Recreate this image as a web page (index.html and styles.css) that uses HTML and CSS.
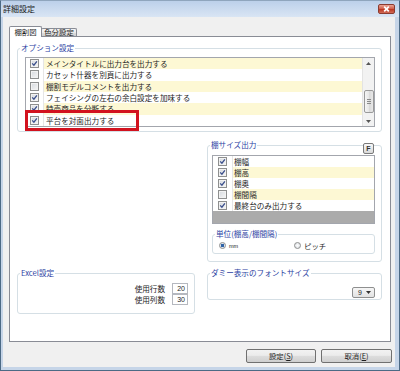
FILE: index.html
```html
<!DOCTYPE html>
<html lang="ja">
  <head>
    <meta charset="utf-8" />
    <title>詳細設定</title>
    <link rel="stylesheet" href="styles.css">
  </head>
  <body>
    <div class="window">
      <div class="titlebar">
        <span class="title">詳細設定</span>
        <span class="close-btn">
          <svg width="9" height="6" viewBox="0 0 9 6">
            <path d="M2.2 0.6 L6.8 5.4 M6.8 0.6 L2.2 5.4" stroke="#fff" stroke-width="1.7" />
          </svg>
        </span>
      </div>

      <div class="client">
        <div class="tabs">
          <div class="tab active">棚割図</div>
          <div class="tab">色分設定</div>
        </div>

        <div class="panel">
          <div class="group options">
            <span class="group-title">オプション設定</span>
            <div class="listbox">
              <div class="rows">
                <div class="row alt">
                  <span class="cell-check"><span class="checkbox"><svg width="7" height="7" viewBox="0 0 7 7"><path d="M1.2 3.4 L2.9 5.2 L5.9 1.4" fill="none" stroke="#3b4f8c" stroke-width="1.3" /></svg></span></span>
                  <span class="cell-text">メインタイトルに出力台を出力する</span>
                </div>
                <div class="row">
                  <span class="cell-check"><span class="checkbox"></span></span>
                  <span class="cell-text">カセット什器を別頁に出力する</span>
                </div>
                <div class="row alt">
                  <span class="cell-check"><span class="checkbox"></span></span>
                  <span class="cell-text">棚割モデルコメントを出力する</span>
                </div>
                <div class="row">
                  <span class="cell-check"><span class="checkbox"><svg width="7" height="7" viewBox="0 0 7 7"><path d="M1.2 3.4 L2.9 5.2 L5.9 1.4" fill="none" stroke="#3b4f8c" stroke-width="1.3" /></svg></span></span>
                  <span class="cell-text">フェイシングの左右の余白設定を加味する</span>
                </div>
                <div class="row alt">
                  <span class="cell-check"><span class="checkbox"><svg width="7" height="7" viewBox="0 0 7 7"><path d="M1.2 3.4 L2.9 5.2 L5.9 1.4" fill="none" stroke="#3b4f8c" stroke-width="1.3" /></svg></span></span>
                  <span class="cell-text">特売商品を分断する</span>
                </div>
                <div class="row">
                  <span class="cell-check"><span class="checkbox"><svg width="7" height="7" viewBox="0 0 7 7"><path d="M1.2 3.4 L2.9 5.2 L5.9 1.4" fill="none" stroke="#3b4f8c" stroke-width="1.3" /></svg></span></span>
                  <span class="cell-text">平台を対面出力する</span>
                </div>
              </div>
              <div class="scrollbar">
                <span class="sb-arrow">
                  <svg width="5" height="3" viewBox="0 0 5 3"><path d="M0 3 L2.5 0 L5 3 Z" fill="#555" /></svg>
                </span>
                <span class="sb-track">
                  <span class="sb-thumb">
                    <svg width="4" height="5" viewBox="0 0 4 5"><path d="M0 0.5 H4 M0 2.5 H4 M0 4.5 H4" stroke="#8a8a8a" stroke-width="1" /></svg>
                  </span>
                </span>
                <span class="sb-arrow down">
                  <svg width="5" height="3" viewBox="0 0 5 3"><path d="M0 0 L2.5 3 L5 0 Z" fill="#555" /></svg>
                </span>
              </div>
            </div>
            <div class="highlight"></div>
          </div>

          <div class="columns">
            <div class="group shelf">
              <span class="group-title">棚サイズ出力</span>
              <span class="f-btn">F</span>
              <div class="grid-list">
                <div class="row">
                  <span class="cell-check wide"><span class="checkbox"><svg width="7" height="7" viewBox="0 0 7 7"><path d="M1.2 3.4 L2.9 5.2 L5.9 1.4" fill="none" stroke="#3b4f8c" stroke-width="1.3" /></svg></span></span>
                  <span class="cell-text">棚幅</span>
                </div>
                <div class="row alt">
                  <span class="cell-check wide"><span class="checkbox"><svg width="7" height="7" viewBox="0 0 7 7"><path d="M1.2 3.4 L2.9 5.2 L5.9 1.4" fill="none" stroke="#3b4f8c" stroke-width="1.3" /></svg></span></span>
                  <span class="cell-text">棚高</span>
                </div>
                <div class="row">
                  <span class="cell-check wide"><span class="checkbox"><svg width="7" height="7" viewBox="0 0 7 7"><path d="M1.2 3.4 L2.9 5.2 L5.9 1.4" fill="none" stroke="#3b4f8c" stroke-width="1.3" /></svg></span></span>
                  <span class="cell-text">棚奥</span>
                </div>
                <div class="row alt">
                  <span class="cell-check wide"><span class="checkbox"></span></span>
                  <span class="cell-text">棚間隔</span>
                </div>
                <div class="row">
                  <span class="cell-check wide"><span class="checkbox"><svg width="7" height="7" viewBox="0 0 7 7"><path d="M1.2 3.4 L2.9 5.2 L5.9 1.4" fill="none" stroke="#3b4f8c" stroke-width="1.3" /></svg></span></span>
                  <span class="cell-text">最終台のみ出力する</span>
                </div>
                <div class="filler"></div>
              </div>

              <div class="group unit">
                <span class="group-title">単位(棚高/棚間隔)</span>
                <label class="option first"><span class="radio on"></span><span class="mm">mm</span></label>
                <label class="option"><span class="radio"></span>ピッチ</label>
              </div>
            </div>

            <div class="group excel">
              <span class="group-title">Excel設定</span>
              <div class="field"><span>使用行数</span><span class="num">20</span></div>
              <div class="field"><span>使用列数</span><span class="num">30</span></div>
            </div>

            <div class="group dummy">
              <span class="group-title">ダミー表示のフォントサイズ</span>
              <span class="select">
                9
                <svg width="5" height="3" viewBox="0 0 5 3"><path d="M0 0 L2.5 3 L5 0 Z" fill="#333" /></svg>
              </span>
            </div>
          </div>
        </div>

        <div class="buttons">
          <button class="btn">設定(<u>S</u>)</button>
          <button class="btn wide">取消(<u>E</u>)</button>
        </div>
      </div>
    </div>
  </body>
</html>
```

FILE: styles.css
```css
* {
  margin: 0;
  padding: 0;
  box-sizing: border-box;
}

html,
body {
  width: 400px;
  height: 371px;
  overflow: hidden;
}

body {
  font-family: "Noto Sans CJK JP", "Noto Sans", sans-serif;
  font-size: 7.6px;
  color: #1e1e1e;
  background: #f0f0f0;
}

.window {
  height: 371px;
  display: flex;
  flex-direction: column;
  border: 1px solid #4c6a85;
  border-top-color: #8fa5bd;
  background: #c6d5e8;
}

.titlebar {
  height: 16px;
  display: flex;
  align-items: center;
  justify-content: space-between;
  padding: 0 4px 0 2px;
  background: linear-gradient(#bcd0ea, #d9e5f4);
}
.title {
  font-size: 8px;
  line-height: 10px;
  color: #1a1a1a;
}
.close-btn {
  width: 17px;
  height: 10px;
  display: flex;
  align-items: center;
  justify-content: center;
  border: 1px solid #8b3b30;
  border-radius: 2px;
  background: linear-gradient(#e9a395, #cf5a45 50%, #bb341f 51%, #d26b57);
}

.client {
  flex: 1;
  display: flex;
  flex-direction: column;
  margin: 0 4px 3px 2px;
  padding: 9px 3px 4px 6px;
  background: #f0f0f0;
}

/* tabs */
.tabs {
  display: flex;
  align-items: flex-end;
  height: 10px;
  position: relative;
  z-index: 1;
}
.tab {
  width: 36px;
  height: 8px;
  margin-left: -1px;
  border: 1px solid #898c95;
  border-bottom: none;
  border-radius: 2px 2px 0 0;
  background: linear-gradient(#f3f3f3, #ebebeb 50%, #dddddd 51%, #cfcfcf);
  font-size: 7.4px;
  line-height: 6px;
  text-align: center;
  white-space: nowrap;
}
.tab.active {
  width: 33px;
  height: 11px;
  margin-left: 0;
  margin-bottom: -1px;
  background: #fff;
  line-height: 9px;
}

.panel {
  height: 306px;
  margin-right: 1px;
  padding: 11px 8px 0 7px;
  background: #fff;
  border: 1px solid #898c95;
}

/* group boxes */
.group {
  position: relative;
  border: 1px solid #d5dfe5;
  border-radius: 3px;
}
.group-title {
  position: absolute;
  top: -7px;
  left: 2px;
  padding: 0 1px;
  background: #fff;
  line-height: 12px;
  color: #2c3fa3;
  white-space: nowrap;
}

.options {
  padding: 8px 6px 4px 7px;
}

.listbox {
  display: flex;
  height: 70px;
  border: 1px solid #a3a6ad;
}
.rows {
  flex: 1;
}
.row {
  display: flex;
  height: 11.33px;
  line-height: 11px;
}
.row.alt .cell-text {
  background: #fdf8d4;
}
.cell-check {
  width: 18px;
  display: flex;
  align-items: center;
  justify-content: center;
  border-right: 1px solid #e6e6e6;
  background: #fff;
}
.cell-check.wide {
  width: 20px;
}
.cell-text {
  flex: 1;
  padding-left: 2px;
  white-space: nowrap;
  overflow: hidden;
}
.checkbox {
  width: 9px;
  height: 9px;
  display: flex;
  align-items: center;
  justify-content: center;
  border: 1px solid #8e8f8f;
  background: linear-gradient(135deg, #d5d9de, #f7f7f7);
  box-shadow: inset 0 0 0 1px #f2f2f2;
}

.scrollbar {
  width: 12px;
  display: flex;
  flex-direction: column;
  align-items: center;
  background: #f2f2f2;
  border-left: 1px solid #e3e3e3;
}
.sb-arrow {
  height: 11px;
  display: flex;
  align-items: center;
  justify-content: center;
}
.sb-arrow.down {
  height: 10px;
}
.sb-track {
  flex: 1;
}
.sb-thumb {
  width: 10px;
  height: 23px;
  margin-top: 21px;
  display: flex;
  align-items: center;
  justify-content: center;
  border: 1px solid #9a9a9a;
  border-radius: 2px;
  background: linear-gradient(90deg, #f5f5f5, #e6e6e6 50%, #d8d8d8 51%, #e9e9e9);
}

.highlight {
  position: absolute;
  left: 7px;
  top: 61px;
  width: 114px;
  height: 21px;
  border: 3px solid #d2121e;
}

/* lower part */
.columns {
  display: grid;
  grid-template-columns: 178px 175px;
  grid-template-rows: 117px auto;
  column-gap: 12px;
  row-gap: 11px;
  margin-top: 13px;
  align-items: start;
}

.shelf {
  grid-column: 2;
  grid-row: 1;
  height: 117px;
  padding: 9px 6px 0 4px;
}
.f-btn {
  position: absolute;
  top: -3px;
  right: 7px;
  width: 11px;
  height: 11px;
  border: 1px solid #7a7a7a;
  border-radius: 2px;
  background: linear-gradient(#f8f8f8, #d9d9d9);
  font-family: "Liberation Sans", sans-serif;
  font-size: 7px;
  font-weight: bold;
  line-height: 9px;
  text-align: center;
  color: #333;
}
.grid-list {
  border: 1px solid #a3a6ad;
}
.grid-list .row {
  height: 11px;
}
.grid-list .cell-text {
  padding-left: 1px;
}
.filler {
  height: 12px;
  background: #ababab;
}

.unit {
  display: flex;
  align-items: center;
  height: 20px;
  margin-top: 10px;
  padding: 3px 0 0 6px;
}
.option {
  display: flex;
  align-items: center;
  gap: 3px;
  font-size: 7.4px;
}
.option.first {
  width: 75px;
}
.radio {
  width: 7px;
  height: 7px;
  border: 1px solid #8e8f8f;
  border-radius: 50%;
  background: radial-gradient(circle, #fff, #d6dadf);
}
.radio.on {
  background: radial-gradient(circle, #2f62a6 0, #2f62a6 1.4px, #dfe5ec 2px);
}
.mm {
  font-family: "Liberation Sans", sans-serif;
  font-size: 5.5px;
}

.excel {
  grid-column: 1;
  grid-row: 2;
  display: flex;
  flex-direction: column;
  align-items: flex-end;
  padding: 9px 6px 8px 0;
}
.field {
  display: flex;
  align-items: center;
  gap: 7px;
  height: 11px;
  line-height: 11px;
}
.num {
  width: 16px;
  height: 11px;
  padding-right: 2px;
  border: 1px solid #b5b8bf;
  background: #fff;
  font-family: "Liberation Sans", sans-serif;
  font-size: 7px;
  line-height: 9px;
  text-align: right;
}

.dummy {
  grid-column: 2;
  grid-row: 2;
  display: flex;
  justify-content: flex-end;
  padding: 13px 6px 1px 0;
}
.select {
  width: 23px;
  height: 11px;
  display: flex;
  align-items: center;
  justify-content: space-between;
  padding: 0 3px 0 5px;
  border: 1px solid #8e8f8f;
  border-radius: 2px;
  background: linear-gradient(#f6f6f6, #e2e2e2);
  font-family: "Liberation Sans", sans-serif;
  font-size: 7px;
}

/* bottom buttons */
.buttons {
  display: flex;
  justify-content: flex-end;
  gap: 5px;
  margin-top: 7px;
}
.btn {
  width: 70px;
  height: 14px;
  border: 1px solid #707070;
  border-radius: 2px;
  background: linear-gradient(#f2f2f2, #ebebeb 45%, #dddddd 50%, #cfcfcf);
  font-family: inherit;
  font-size: 7.4px;
  line-height: 12px;
  color: #1e1e1e;
}
.btn.wide {
  width: 71px;
}
```
